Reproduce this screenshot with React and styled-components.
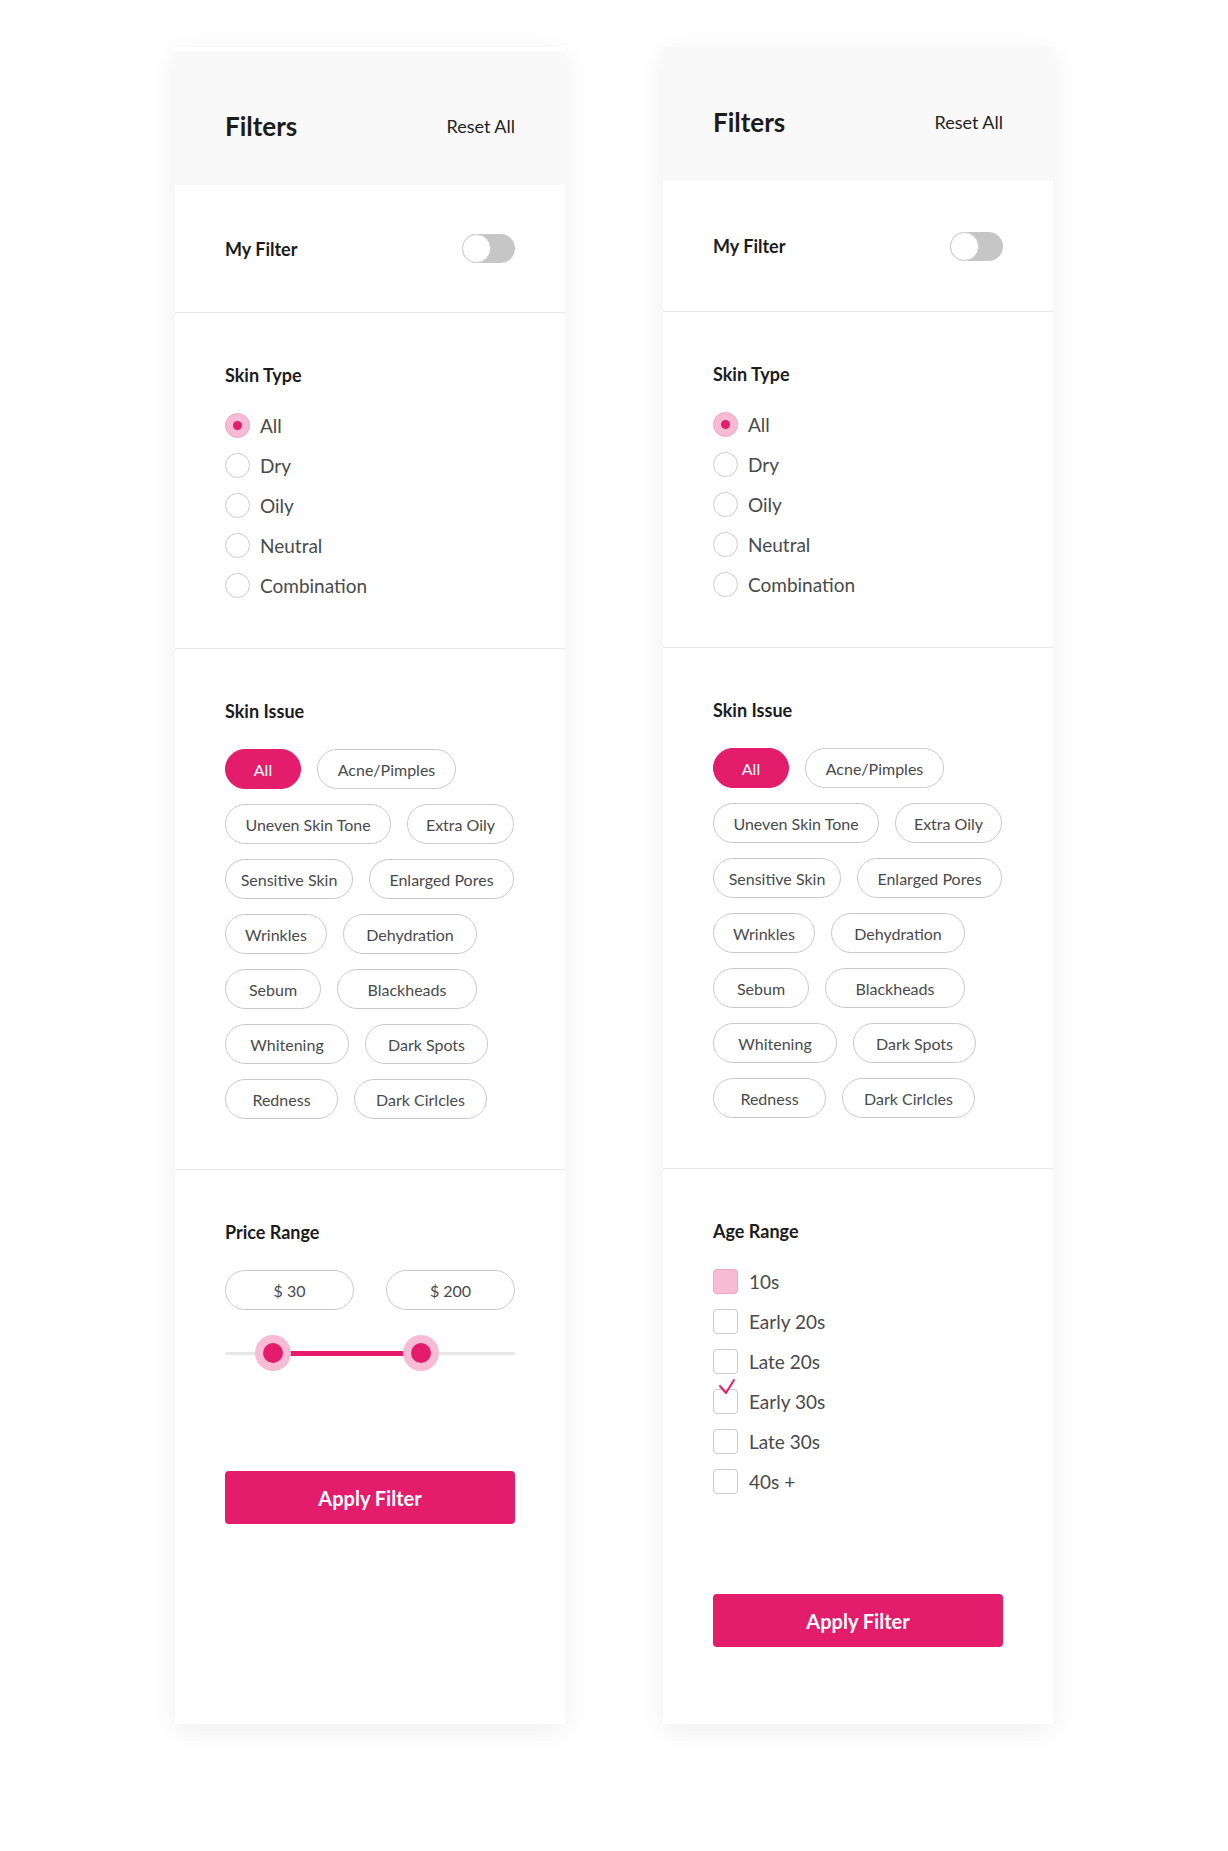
import React from 'react'
import styled, { createGlobalStyle } from 'styled-components'

const GlobalStyle = createGlobalStyle`
* { box-sizing: border-box; }
body {
  margin: 0;
  background: #fff;
  font-family: Lato, "Noto Sans", sans-serif;
  color: #222;
}
`;

const Page = styled.div`
display: flex;
align-items: flex-start;
gap: 98px;
padding: 47px 0 0 175px;
min-height: 1851px;
`;

const Panel = styled.div`
width: 390px;
height: 1677px;
background: #fff;
border-top: ${p => p.$strip}px solid #fff;
box-shadow: 0 6px 26px rgba(0, 0, 0, 0.07);
display: flex;
flex-direction: column;
`;

const Header = styled.div`
height: 134px;
flex-shrink: 0;
background: #f9f9f9;
padding: 16px 50px 0;
display: flex;
align-items: center;
justify-content: space-between;
`;

const Heading = styled.h1`
margin: 0;
font-size: 26px;
font-weight: 700;
line-height: 32px;
color: #1c1c1c;
`;

const TextButton = styled.span`
font-size: 18px;
line-height: 24px;
color: #222;
`;

const ToggleRow = styled.div`
height: ${p => p.$h}px;
flex-shrink: 0;
padding: 0 50px;
display: flex;
align-items: center;
justify-content: space-between;
border-bottom: 1px solid #e6e6e6;
`;

const Label = styled.span`
font-size: 18px;
font-weight: 700;
line-height: 24px;
color: #1c1c1c;
`;

const Track = styled.div`
width: 53px;
height: 29px;
border-radius: 15px;
background: #c6c6c6;
display: flex;
`;

const Knob = styled.div`
width: 29px;
height: 29px;
border-radius: 50%;
background: #fff;
border: 1px solid #cfcfcf;
`;

const Section = styled.div`
padding: 50px 50px ${p => (p.$last ? 0 : 50)}px;
border-bottom: ${p => (p.$last ? 'none' : '1px solid #e6e6e6')};
flex-shrink: 0;
`;

const Title = styled.h2`
margin: 0 0 26px;
font-size: 18px;
font-weight: 700;
line-height: 24px;
color: #1c1c1c;
`;

const OptionList = styled.div`
display: flex;
flex-direction: column;
gap: 15px;
`;

const Option = styled.label`
display: flex;
align-items: center;
gap: ${p => p.$gap}px;
height: 25px;
font-size: 19px;
color: #4a4a4a;
`;

const Radio = styled.span`
width: 25px;
height: 25px;
border-radius: 50%;
border: 1px solid ${p => (p.$on ? '#f2a3c3' : '#cbcbcb')};
background: ${p => (p.$on ? '#f7bcd3' : '#fff')};
display: flex;
align-items: center;
justify-content: center;
flex-shrink: 0;
`;

const Dot = styled.span`
width: 9px;
height: 9px;
border-radius: 50%;
background: #e31c6b;
`;

const Box = styled.span`
position: relative;
width: 25px;
height: 25px;
border-radius: 4px;
border: 1px solid ${p => (p.$on ? '#f2a3c3' : '#cbcbcb')};
background: ${p => (p.$on ? '#f7bcd3' : '#fff')};
flex-shrink: 0;
`;

const Tick = styled.svg`
position: absolute;
left: -1px;
top: -13px;
`;

const Chips = styled.div`
display: flex;
flex-wrap: wrap;
gap: 15px 16px;
`;

const Chip = styled.span`
width: ${p => p.$w}px;
height: 40px;
border-radius: 20px;
border: 1px solid ${p => (p.$on ? '#e31c6b' : '#cacaca')};
background: ${p => (p.$on ? '#e31c6b' : '#fff')};
color: ${p => (p.$on ? '#fff' : '#4a4a4a')};
font-size: 16px;
display: flex;
align-items: center;
justify-content: center;
white-space: nowrap;
`;

const PriceInputs = styled.div`
display: grid;
grid-template-columns: 1fr 1fr;
gap: 32px;
`;

const PriceBox = styled.div`
height: 40px;
border-radius: 20px;
border: 1px solid #cacaca;
font-size: 16px;
color: #4a4a4a;
display: flex;
align-items: center;
justify-content: center;
`;

const Slider = styled.div`
position: relative;
height: 36px;
margin-top: 25px;
&::before {
  content: '';
  position: absolute;
  left: 0;
  right: 0;
  top: 17px;
  height: 3px;
  border-radius: 2px;
  background: #e6e6e6;
}
`;

const Fill = styled.div`
position: absolute;
top: 16px;
height: 5px;
background: #e31c6b;
`;

const Thumb = styled.div`
position: absolute;
top: 0;
width: 36px;
height: 36px;
margin-left: -18px;
border-radius: 50%;
background: #f7bcd3;
display: flex;
align-items: center;
justify-content: center;
`;

const ThumbCore = styled.div`
width: 20px;
height: 20px;
border-radius: 50%;
background: #e31c6b;
`;

const Footer = styled.div`
padding: 0 50px;
margin-top: 100px;
`;

const ApplyButton = styled.button`
width: 100%;
height: 53px;
border: none;
border-radius: 4px;
background: #e31c6b;
color: #fff;
font-family: inherit;
font-size: 20px;
font-weight: 700;
cursor: pointer;
`;

const skinTypes = ['All', 'Dry', 'Oily', 'Neutral', 'Combination'];

const skinIssues = [
  ['All', 76], ['Acne/Pimples', 139],
  ['Uneven Skin Tone', 166], ['Extra Oily', 107],
  ['Sensitive Skin', 128], ['Enlarged Pores', 145],
  ['Wrinkles', 102], ['Dehydration', 134],
  ['Sebum', 96], ['Blackheads', 140],
  ['Whitening', 124], ['Dark Spots', 123],
  ['Redness', 113], ['Dark Cirlcles', 133],
];

const ages = [
  { label: '10s', filled: true },
  { label: 'Early 20s' },
  { label: 'Late 20s' },
  { label: 'Early 30s', checked: true },
  { label: 'Late 30s' },
  { label: '40s +' },
];

const TopPart = ({ strip, rowHeight }) => (
  <>
    <Header>
      <Heading>Filters</Heading>
      <TextButton>Reset All</TextButton>
    </Header>
    <ToggleRow $h={rowHeight}>
      <Label>My Filter</Label>
      <Track><Knob /></Track>
    </ToggleRow>
    <Section>
      <Title>Skin Type</Title>
      <OptionList>
        {skinTypes.map((t, i) => (
          <Option key={t} $gap={10}>
            <Radio $on={i === 0}>{i === 0 && <Dot />}</Radio>
            {t}
          </Option>
        ))}
      </OptionList>
    </Section>
    <Section>
      <Title>Skin Issue</Title>
      <Chips>
        {skinIssues.map(([name, w], i) => (
          <Chip key={name} $w={w} $on={i === 0}>{name}</Chip>
        ))}
      </Chips>
    </Section>
  </>
);

const PricePanel = () => {
  const lo = 16.6;
  const hi = 67.6;
  return (
    <Panel $strip={4}>
      <TopPart rowHeight={128} />
      <Section $last>
        <Title>Price Range</Title>
        <PriceInputs>
          <PriceBox>$ 30</PriceBox>
          <PriceBox>$ 200</PriceBox>
        </PriceInputs>
        <Slider>
          <Fill style={{ left: `${lo}%`, right: `${100 - hi}%` }} />
          <Thumb style={{ left: `${lo}%` }}><ThumbCore /></Thumb>
          <Thumb style={{ left: `${hi}%` }}><ThumbCore /></Thumb>
        </Slider>
      </Section>
      <Footer>
        <ApplyButton>Apply Filter</ApplyButton>
      </Footer>
    </Panel>
  );
};

const AgePanel = () => (
  <Panel $strip={0}>
    <TopPart rowHeight={131} />
    <Section $last>
      <Title>Age Range</Title>
      <OptionList>
        {ages.map(a => (
          <Option key={a.label} $gap={11}>
            <Box $on={a.filled}>
              {a.checked && (
                <Tick width="26" height="18" viewBox="0 0 26 18">
                  <polyline points="7,9 13,16 21,3" fill="none" stroke="#e31c6b" strokeWidth="2" strokeLinecap="round" strokeLinejoin="round" />
                </Tick>
              )}
            </Box>
            {a.label}
          </Option>
        ))}
      </OptionList>
    </Section>
    <Footer>
      <ApplyButton>Apply Filter</ApplyButton>
    </Footer>
  </Panel>
);

const App = () => (
  <>
    <GlobalStyle />
    <Page>
      <PricePanel />
      <AgePanel />
    </Page>
  </>
);

export default App
